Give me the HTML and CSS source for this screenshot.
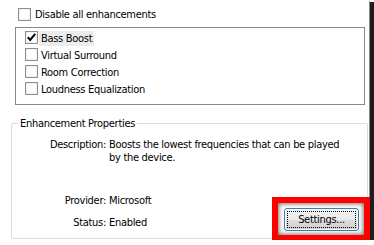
FILE: index.html
```html
<!DOCTYPE html>
<html lang="en">
<head>
	<meta charset="UTF-8">
	<title>Speaker Properties - Enhancements</title>
	<link rel="stylesheet" href="styles.css">
</head>
<body>
	<div class="dialog">
		<label class="check-row">
			<span class="box"></span>
			<span class="check-text">Disable all enhancements</span>
		</label>

		<ul class="listbox">
			<li>
				<span class="box checked">
					<svg width="11" height="11" viewBox="0 0 11 11"><path d="M1.8 5.3 L4.2 7.9 L9.2 1.9" fill="none" stroke="#000" stroke-width="2"/></svg>
				</span>
				<span class="item-text selected">Bass Boost</span>
			</li>
			<li><span class="box"></span><span class="item-text">Virtual Surround</span></li>
			<li><span class="box"></span><span class="item-text">Room Correction</span></li>
			<li><span class="box"></span><span class="item-text">Loudness Equalization</span></li>
		</ul>

		<fieldset class="props">
			<legend>Enhancement Properties</legend>
			<div class="prop-row desc">
				<span class="prop-label">Description:</span>
				<span class="prop-value">Boosts the lowest frequencies that can be played by the device.</span>
			</div>
			<div class="prop-row provider">
				<span class="prop-label">Provider:</span>
				<span class="prop-value">Microsoft</span>
			</div>
			<div class="prop-row status">
				<span class="prop-label">Status:</span>
				<span class="prop-value">Enabled</span>
				<button class="btn"><span class="focus">Settings...</span></button>
			</div>
		</fieldset>

		<!-- annotation drawn over the screenshot -->
		<div class="highlight"></div>
	</div>
</body>
</html>
```

FILE: styles.css
```css
*{
	margin: 0;
	padding: 0;
	box-sizing: border-box;
}
body{
	background: #fff;
	font-family: "DejaVu Sans Condensed", "DejaVu Sans", sans-serif;
	font-size: 11px;
	line-height: 13px;
	letter-spacing: -0.3px;
	color: #000;
}
.dialog{
	position: relative;
	width: 369px;
	height: 240px;
	background: #fff;
	padding-top: 8px;
	box-shadow: 1px 1px 0 #8a8a8a, 2px 5px 0 3px #1e1e1e;
}
.box{
	display: block;
	width: 13px;
	height: 13px;
	border: 1px solid #8e8f8f;
	background: #fff;
	box-shadow: inset 0 0 0 1px #f1f1f1;
	flex: none;
}
.check-row{
	display: flex;
	align-items: center;
	gap: 4px;
	margin-left: 18px;
	height: 13px;
}
.listbox{
	list-style: none;
	width: 350px;
	height: 78px;
	margin: 6px 0 0 15px;
	border: 1px solid #828790;
	padding: 3px 0 0 9px;
}
.listbox li{
	display: flex;
	align-items: flex-start;
	gap: 1px;
	height: 17px;
}
.item-text{
	padding: 1px 2px;
	height: 15px;
}
.item-text.selected{
	background: #ececec;
}
.props{
	width: 357px;
	height: 122px;
	margin: 12px 0 0 11px;
	border: 1px solid #d5dfe5;
	border-radius: 2px;
	padding: 0 8px 0 6px;
}
.props legend{
	padding: 0 2px;
}
.prop-row{
	display: flex;
}
.prop-label{
	width: 88px;
	margin-right: 3px;
	text-align: right;
	flex: none;
}
.prop-value{
	width: 240px;
}
.desc{
	margin-top: 8px;
}
.provider{
	margin-top: 30px;
}
.status{
	margin-top: 1px;
	align-items: flex-end;
}
.status .prop-label,
.status .prop-value{
	margin-bottom: 2px;
}
.status .prop-value{
	width: auto;
}
.btn{
	margin-left: auto;
	width: 75px;
	height: 23px;
	border: 1px solid #3c7fb1;
	border-radius: 3px;
	background: linear-gradient(#f2f2f2 0%, #ebebeb 50%, #dddddd 51%, #cfcfcf 100%);
	box-shadow: inset 0 0 0 1px #fcfcfc;
	font: inherit;
	letter-spacing: inherit;
	color: #000;
	padding: 2px;
}
.btn .focus{
	display: block;
	height: 100%;
	border: 1px dotted #000;
	line-height: 15px;
}
.highlight{
	position: absolute;
	left: 272px;
	top: 197px;
	width: 98px;
	height: 44px;
	border: 6px solid #f00;
	box-shadow: inset 0 0 4px 1px rgba(0,0,0,0.55);
}
```
